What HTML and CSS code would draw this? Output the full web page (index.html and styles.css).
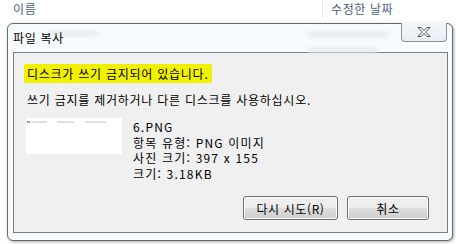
FILE: index.html
```html
<!DOCTYPE html>
<html lang="ko">
<head>
    <meta charset="UTF-8">
    <title>파일 복사</title>
    <link rel="stylesheet" href="styles.css">
</head>
<body>
<div class="explorer">
    <div class="columns">
        <div class="col col-name">이름</div>
        <div class="col col-date">수정한 날짜</div>
    </div>
</div>

<div class="dialog">
    <div class="titlebar">
        <div class="ghost">
            <span class="ghost-bar ghost-a"></span>
            <span class="ghost-bar ghost-b"></span>
            <span class="ghost-bar ghost-c"></span>
        </div>
        <div class="title">파일 복사</div>
        <div class="close">
            <svg width="18" height="12" viewBox="0 0 18 12">
                <path d="M3 1.5h3l3 3 3-3h3l-4.5 4.5 4.5 4.5h-3l-3-3-3 3h-3l4.5-4.5z" fill="#fff" stroke="#4a4f57" stroke-width="1" stroke-linejoin="round"/>
            </svg>
        </div>
    </div>

    <div class="client">
        <div class="message"><span class="marker">디스크가 쓰기 금지되어 있습니다.</span></div>
        <div class="hint">쓰기 금지를 제거하거나 다른 디스크를 사용하십시오.</div>

        <div class="file">
            <div class="thumb">
                <span class="thumb-icon"></span>
                <span class="thumb-cell thumb-a"></span>
                <span class="thumb-cell thumb-b"></span>
                <span class="thumb-cell thumb-c"></span>
            </div>
            <div class="info">
                <div class="info-line">6.PNG</div>
                <div class="info-line">항목 유형: PNG 이미지</div>
                <div class="info-line">사진 크기: 397 x 155</div>
                <div class="info-line">크기: 3.18KB</div>
            </div>
        </div>

        <div class="buttons">
            <button class="btn btn-retry">다시 시도(R)</button>
            <button class="btn btn-cancel">취소</button>
        </div>
    </div>
</div>
</body>
</html>
```
FILE: styles.css
```css
body {
    margin: 0;
    width: 456px;
    height: 244px;
    overflow: hidden;
    background: #fff;
    font-family: "Noto Sans CJK KR", "Noto Sans", sans-serif;
    font-size: 12px;
    color: #000;
    position: relative;
}

.columns {
    display: flex;
    height: 18px;
    line-height: 17px;
    color: #4c607a;
    letter-spacing: 0.6px;
}

.col-name {
    padding-left: 13px;
    width: 309px;
}

.col-date {
    border-left: 1px solid #e3e8ee;
    padding-left: 8px;
}

/* dialog window */
.dialog {
    position: absolute;
    left: 7px;
    top: 23px;
    width: 444px;
    height: 216px;
    border: 1px solid #6a6a6a;
    border-radius: 6px;
    background: #f8fbfd;
    box-shadow: 1px 1px 3px rgba(0, 0, 0, 0.35);
    display: flex;
    flex-direction: column;
}

.titlebar {
    height: 28px;
    position: relative;
    display: flex;
    align-items: center;
    padding-left: 5px;
}

/* blurred explorer rows seen through the glass */
.ghost {
    position: absolute;
    left: 0;
    top: 0;
    right: 0;
    height: 28px;
    filter: blur(2px);
}

.ghost-bar {
    position: absolute;
    height: 5px;
    background: #e6e9ed;
    border-radius: 2px;
}

.ghost-a {
    left: 40px;
    top: 7px;
    width: 50px;
}

.ghost-b {
    left: 300px;
    top: 8px;
    width: 80px;
}

.ghost-c {
    left: 300px;
    top: 24px;
    width: 70px;
}

.title {
    position: relative;
    letter-spacing: 0.7px;
    padding-bottom: 2px;
}

.close {
    position: absolute;
    right: 5px;
    top: -1px;
    width: 44px;
    height: 18px;
    border: 1px solid #8a9097;
    border-top: none;
    border-radius: 0 0 4px 4px;
    background: linear-gradient(#f4f7fa, #e9eef3);
    display: flex;
    align-items: center;
    justify-content: center;
}

.client {
    margin: 0 4px 0 5px;
    height: 179px;
    border: 1px solid #7c7c7c;
    background: #f0f0f0;
    display: flex;
    flex-direction: column;
    letter-spacing: 0.75px;
}

.message {
    margin: 11px 0 0 10px;
    height: 19px;
}

.marker {
    display: inline-block;
    background: #f0f000;
    padding: 0 3px 0 3px;
    line-height: 19px;
    border-radius: 2px;
}

.hint {
    margin: 8px 0 0 13px;
    line-height: 18px;
}

.file {
    display: flex;
    margin: 9px 0 0 12px;
}

.thumb {
    width: 96px;
    height: 36px;
    background: #fff;
    position: relative;
}

.thumb-icon,
.thumb-cell {
    position: absolute;
    top: 3px;
    height: 2px;
}

.thumb-icon {
    left: 1px;
    width: 3px;
    background: #8c9be0;
}

.thumb-cell {
    background: #dedede;
}

.thumb-a {
    left: 5px;
    width: 16px;
}

.thumb-b {
    left: 31px;
    width: 17px;
}

.thumb-c {
    left: 59px;
    width: 21px;
}

.info {
    margin: 1px 0 0 11px;
    letter-spacing: 1.2px;
}

.info-line {
    height: 15.5px;
    line-height: 15px;
}

.buttons {
    display: flex;
    justify-content: flex-end;
    gap: 9px;
    margin-top: auto;
    margin-bottom: 12px;
    padding-right: 18px;
}

.btn {
    height: 24px;
    border: 1px solid #707070;
    border-radius: 3px;
    background: linear-gradient(#f2f2f2 0%, #ebebeb 50%, #dddddd 51%, #cfcfcf 100%);
    box-shadow: inset 0 0 0 1px #fbfbfb;
    font-family: inherit;
    font-size: 12px;
    letter-spacing: 0.6px;
    color: #000;
    padding: 0;
}

.btn-retry {
    width: 95px;
}

.btn-cancel {
    width: 82px;
}
```
